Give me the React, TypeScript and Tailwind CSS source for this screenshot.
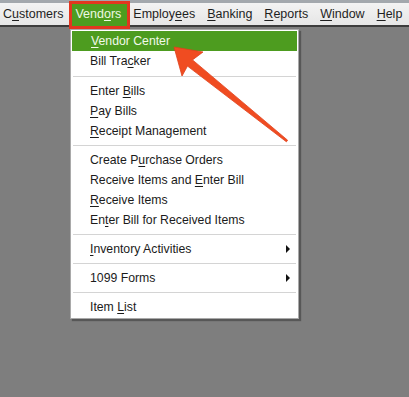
import React from 'react';

// underline the mnemonic letter at index u
function Label({ text, u }: { text: string; u?: number }) {
  if (u === undefined) return <>{text}</>;
  return (
    <>
      {text.slice(0, u)}
      <span className="underline underline-offset-2">{text[u]}</span>
      {text.slice(u + 1)}
    </>
  );
}

const barItems = [
  { text: 'Customers', u: 1 },
  { text: 'Vendors', u: 4, active: true },
  { text: 'Employees', u: 6 },
  { text: 'Banking', u: 0 },
  { text: 'Reports', u: 0 },
  { text: 'Window', u: 0 },
  { text: 'Help', u: 0 },
];

type Entry = { text?: string; u?: number; sub?: boolean; hot?: boolean; sep?: number };

const entries: Entry[] = [
  { text: 'Vendor Center', u: 0, hot: true },
  { text: 'Bill Tracker', u: 8 },
  { sep: 10 },
  { text: 'Enter Bills', u: 6 },
  { text: 'Pay Bills', u: 0 },
  { text: 'Receipt Management', u: 0 },
  { sep: 9 },
  { text: 'Create Purchase Orders', u: 8 },
  { text: 'Receive Items and Enter Bill', u: 18 },
  { text: 'Receive Items', u: 0 },
  { text: 'Enter Bill for Received Items', u: 2 },
  { sep: 9 },
  { text: 'Inventory Activities', u: 0, sub: true },
  { sep: 9 },
  { text: '1099 Forms', sub: true },
  { sep: 9 },
  { text: 'Item List', u: 5 },
];

export default function App() {
  return (
    <div className="relative w-[409px] h-[397px] overflow-hidden bg-[#7e7e7e] flex flex-col" style={{ fontFamily: '"Liberation Sans", Arial, sans-serif' }}>
      <div className="h-[3px] bg-[#a3a8ad]" />
      <div className="h-[24px] bg-gradient-to-b from-[#f3f3f3] to-[#e6e6e6] border-b-2 border-[#3c3c3c] flex items-stretch gap-[12px] pl-[3px] text-[12.5px] text-[#1e1e1e]">
        {barItems.map(b => (
          <div key={b.text} className="relative flex items-center pt-[1px]">
            {b.active && (
              <div className="absolute left-[-6px] right-[-9px] top-[-2px] bottom-[-4px] border-[3px] border-[#e2361f] bg-[#4d9c1f]" />
            )}
            <span className={b.active ? 'relative text-[#eef8e4]' : 'relative'}>
              <Label text={b.text} u={b.u} />
            </span>
          </div>
        ))}
      </div>

      <div className="flex-1 relative">
        <div className="absolute left-[70px] top-[2px] w-[229px] bg-white border border-[#a9a9a9] shadow-[2px_2px_1px_rgba(40,40,40,0.45)] pt-[1px] pb-[1px] flex flex-col text-[12.25px] text-[#1b1b1b]">
          {entries.map((e, i) =>
            e.sep ? (
              <div key={i} className="flex items-center px-[2px]" style={{ height: e.sep }}>
                <div className="h-px flex-1 bg-[#d4d4d4]" />
              </div>
            ) : (
              <div
                key={i}
                className={
                  'h-[20px] flex items-center pl-[19px] pr-[8px] ' +
                  (e.hot ? 'bg-[#4d9c1f] text-[#f2faea] mx-[1px] pl-[18px]' : '')
                }
              >
                <span className="flex-1 whitespace-nowrap">
                  <Label text={e.text!} u={e.u} />
                </span>
                {e.sub && (
                  <span className="w-0 h-0 border-y-[4px] border-y-transparent border-l-[4px] border-l-[#111]" />
                )}
              </div>
            )
          )}
        </div>
      </div>

      <svg className="absolute inset-0 pointer-events-none" width="409" height="397" viewBox="0 0 409 397">
        <polygon
          points="174,47 203,52 192.5,59.9 287.6,140.2 286.4,141.8 187.5,66.1 182,76"
          fill="#f04c21"
          stroke="#e0401a"
          strokeWidth="0.8"
          strokeLinejoin="round"
        />
      </svg>
    </div>
  );
}
